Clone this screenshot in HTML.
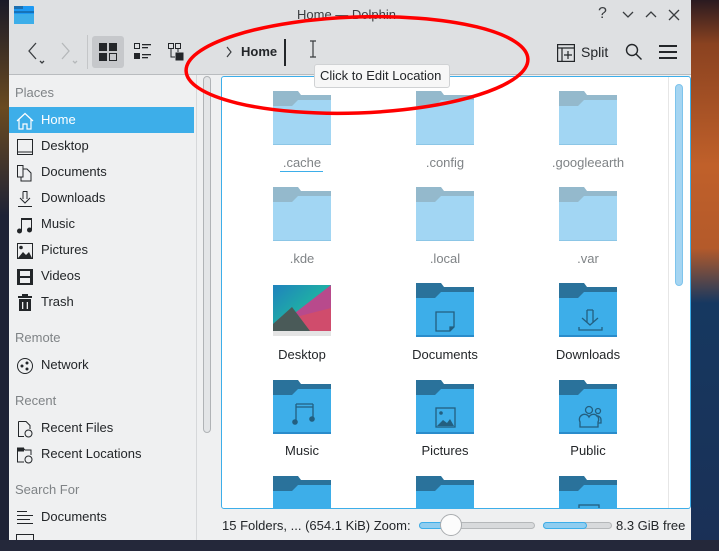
<!DOCTYPE html>
<html><head><meta charset="utf-8"><style>
*{margin:0;padding:0;box-sizing:border-box}
body{width:719px;height:551px;overflow:hidden;position:relative;font-family:"Liberation Sans","DejaVu Sans",sans-serif;background:#1b2236}
.a{position:absolute}
.t{font-size:13px;color:#232629;white-space:nowrap}
.sb .i{position:absolute;left:9px;width:185px;height:26px;font-size:13px;color:#232629;line-height:26px;padding-left:32px}
.sb .h{position:absolute;left:15px;font-size:13px;color:#7f8386}
.sb svg{position:absolute;left:7px;top:5px}
.lab{position:absolute;width:120px;text-align:center;font-size:13px;color:#232629}
.hid{color:#7f8386}
</style></head><body>
<div class="a" style="left:691px;top:0;width:28px;height:551px;background:linear-gradient(180deg,#2a1a20 0,#8a4220 8%,#c0602a 30%,#b45a2a 45%,#163860 55%,#1a3056 100%)"></div>
<div class="a" style="left:0;top:540px;width:719px;height:11px;background:#24283a"></div>
<div class="a" style="left:0;top:0;width:9px;height:540px;background:linear-gradient(180deg,#1a1a28,#6a4a20 20%,#1e2236 40%,#1e2236)"></div>
<div class="a" style="left:9px;top:0;width:682px;height:540px;background:#eff0f1"></div>
<div class="a" style="left:9px;top:0;width:682px;height:74px;background:#dee0e2"></div>
<div class="a" style="left:9px;top:74px;width:682px;height:1px;background:#b9bcbf"></div>
<svg class="a" style="left:14px;top:6px" width="20" height="18"><rect x="0" y="0" width="20" height="18" rx="1" fill="#1d99f3"/><rect x="0" y="0" width="9" height="3" fill="#1d6fb0"/><rect x="0" y="5" width="20" height="2" fill="#1673b8"/><rect x="0" y="8" width="20" height="10" fill="#3daee9"/></svg>
<div class="a t" style="left:297px;top:7px;color:#3a3d40">Home — Dolphin</div>
<div class="a t" style="left:598px;top:5px;font-size:16px;color:#3a3d40">?</div>
<svg class="a" style="left:622px;top:9px" width="60" height="12" fill="none" stroke="#3a3d40" stroke-width="1.3"><path d="M1 3 L6 8 L11 3"/><path d="M24 8 L29 3 L34 8"/><path d="M47 1 L57 11 M57 1 L47 11"/></svg>
<svg class="a" style="left:24px;top:40px" width="60" height="26" fill="none" stroke="#3a3d40" stroke-width="1.3"><path d="M12 3 L5 11 L12 19"/><path d="M16 21 l2 2 l2 -2" /><path d="M38 3 L45 11 L38 19" stroke="#b5b8ba"/><path d="M49 21 l2 2 l2 -2" stroke="#b5b8ba"/></svg>
<div class="a" style="left:87px;top:35px;width:1px;height:34px;background:#c4c6c8"></div>
<div class="a" style="left:92px;top:36px;width:32px;height:32px;background:#c6c8cb;border-radius:3px"></div>
<svg class="a" style="left:99px;top:43px" width="18" height="18"><rect x="0.5" y="0.5" width="7" height="7" fill="#232629" stroke="#232629"/><rect x="10.5" y="0.5" width="7" height="7" fill="#232629" stroke="#232629"/><rect x="0.5" y="10.5" width="7" height="7" fill="#232629" stroke="#232629"/><rect x="10.5" y="10.5" width="7" height="7" fill="none" stroke="#232629"/></svg>
<svg class="a" style="left:134px;top:43px" width="18" height="18" fill="#232629"><rect x="0.5" y="0.5" width="5" height="5" fill="none" stroke="#232629"/><rect x="8" y="1" width="9" height="1.3"/><rect x="8" y="4" width="6" height="1.3"/><rect x="0" y="10" width="6" height="6"/><rect x="8" y="11" width="9" height="1.3"/><rect x="8" y="14" width="6" height="1.3"/></svg>
<svg class="a" style="left:168px;top:43px" width="18" height="18" fill="none" stroke="#232629"><rect x="0.5" y="0.5" width="5" height="5"/><rect x="7.5" y="0.5" width="5" height="5"/><path d="M3 6 V14 H7 M10 6 V9"/><rect x="8" y="10" width="7" height="7" fill="#232629"/></svg>
<svg class="a" style="left:225px;top:46px" width="8" height="12" fill="none" stroke="#3a3d40" stroke-width="1.2"><path d="M2 1 L6 6 L2 11"/></svg>
<div class="a t" style="left:241px;top:44px;font-weight:bold;font-size:13px">Home</div>
<div class="a" style="left:284px;top:39px;width:2px;height:27px;background:#232629"></div>
<svg class="a" style="left:309px;top:40px" width="8" height="18" fill="none" stroke="#3a3d40" stroke-width="1.2"><path d="M1 1 H7 M4 1 V17 M1 17 H7"/></svg>
<svg class="a" style="left:557px;top:44px" width="18" height="18" fill="none" stroke="#232629" stroke-width="1.2"><rect x="0.6" y="0.6" width="16.8" height="16.8"/><path d="M0.6 4 H17.4 M5 4 V17.4 M11 7 V15 M7 11 H15"/></svg>
<div class="a t" style="left:581px;top:44px;font-size:14px">Split</div>
<svg class="a" style="left:625px;top:43px" width="18" height="18" fill="none" stroke="#232629" stroke-width="1.4"><circle cx="7" cy="7" r="5.5"/><path d="M11 11 L16.5 16.5"/></svg>
<svg class="a" style="left:659px;top:45px" width="18" height="14" fill="#232629"><rect y="0" width="18" height="2"/><rect y="6" width="18" height="2"/><rect y="12" width="18" height="2"/></svg>
<div class="sb">
<div class="h" style="top:85px">Places</div>
<div class="i" style="top:107px;background:#3daee9;color:#fff"><svg width="18" height="18" fill="none" stroke="#fff" stroke-width="1.2"><path d="M1 9 L9 1.5 L17 9 M3 7.5 V17 H7 V12 H11 V17 H15 V7.5"/></svg>Home</div>
<div class="i" style="top:133px"><svg width="18" height="18" fill="none" stroke="#232629"><rect x="1.5" y="1.5" width="15" height="15"/><path d="M1.5 14 H16.5"/></svg>Desktop</div>
<div class="i" style="top:159px"><svg width="18" height="18" fill="none" stroke="#232629"><path d="M1.5 1.5 H7 V13 H1.5 Z M7 5 H11 L15 9 V17 H5 V13"/></svg>Documents</div>
<div class="i" style="top:185px"><svg width="18" height="18" fill="none" stroke="#232629"><path d="M7 1.5 H11 V9 M7 1.5 V9 M4 8 L9 13 L14 8 M2 16.5 H16"/></svg>Downloads</div>
<div class="i" style="top:211px"><svg width="18" height="18" fill="#232629"><path d="M5 2 H16 V14 H15 V4 H6 V15 H5Z"/><circle cx="3.5" cy="15" r="2.5"/><circle cx="13.5" cy="14" r="2.5"/></svg>Music</div>
<div class="i" style="top:237px"><svg width="18" height="18"><rect x="1.5" y="1.5" width="15" height="15" fill="none" stroke="#232629"/><circle cx="5" cy="5.5" r="1.8" fill="#232629"/><path d="M2 16 L7 10 L10 13 L13 10 L16 16Z" fill="#232629"/></svg>Pictures</div>
<div class="i" style="top:263px"><svg width="18" height="18" fill="#232629"><rect x="1" y="1" width="16" height="16"/><rect x="4" y="3" width="10" height="5" fill="#eff0f1"/><rect x="4" y="10" width="10" height="5" fill="#eff0f1"/></svg>Videos</div>
<div class="i" style="top:289px"><svg width="18" height="18" fill="#232629"><rect x="2" y="2" width="14" height="2"/><rect x="6" y="0" width="6" height="2"/><rect x="3" y="5" width="12" height="12"/><rect x="6" y="8" width="1.3" height="7" fill="#eff0f1"/><rect x="10.7" y="8" width="1.3" height="7" fill="#eff0f1"/></svg>Trash</div>
<div class="h" style="top:330px">Remote</div>
<div class="i" style="top:352px"><svg width="18" height="18" fill="none" stroke="#232629"><circle cx="9" cy="9" r="7.5"/><circle cx="6" cy="9" r="1" fill="#232629"/><circle cx="11" cy="6" r="1" fill="#232629"/><circle cx="11" cy="12" r="1" fill="#232629"/></svg>Network</div>
<div class="h" style="top:393px">Recent</div>
<div class="i" style="top:415px"><svg width="18" height="18" fill="none" stroke="#232629"><path d="M2.5 1.5 H10 L14 5.5 V9 M2.5 1.5 V16.5 H8"/><circle cx="12.5" cy="13.5" r="3.5"/></svg>Recent Files</div>
<div class="i" style="top:441px"><svg width="18" height="18" fill="none" stroke="#232629"><path d="M1.5 2 H7 L9 4 H15 V9 M1.5 2 V16 H8" fill="none"/><rect x="1.5" y="2" width="6" height="3" fill="#232629"/><circle cx="12.5" cy="13.5" r="3.5"/></svg>Recent Locations</div>
<div class="h" style="top:482px">Search For</div>
<div class="i" style="top:504px"><svg width="18" height="18" fill="#232629"><rect x="1" y="2" width="10" height="1"/><rect x="1" y="6" width="16" height="1"/><rect x="1" y="10" width="13" height="1"/><rect x="1" y="14" width="16" height="1"/></svg>Documents</div>
<div class="a" style="left:16px;top:534px;width:18px;height:6px;border:1px solid #232629;border-bottom:none"></div>
</div>
<div class="a" style="left:196px;top:75px;width:1px;height:465px;background:#d6d8da"></div>
<div class="a" style="left:203px;top:76px;width:8px;height:357px;border:1px solid #b0b3b6;border-radius:4px;background:#e3e5e7"></div>
<div class="a" style="left:221px;top:76px;width:470px;height:433px;background:#fff;border:1px solid #3daee9;border-radius:3px;overflow:hidden">
<div class="a" style="left:446px;top:0;width:1px;height:433px;background:#e6e6e6"></div>
<div class="a" style="left:453px;top:7px;width:8px;height:202px;background:#a5d5f2;border:1px solid #7ec4ec;border-radius:4px"></div>
</div>
<svg width="0" height="0" style="position:absolute"><defs>
<g id="fh"><path d="M0 0 H25 L28 4 H58 V20 H0Z" fill="#94b9cc"/><path d="M0 15 H19 L25 9 H58 V54 H0Z" fill="#a2d6f3"/><rect y="53" width="58" height="1" fill="#8cc6e6"/></g>
<g id="fr"><path d="M0 0 H25 L28 4 H58 V20 H0Z" fill="#2a729b"/><path d="M0 15 H19 L25 9 H58 V54 H0Z" fill="#3daee9"/><rect y="52" width="58" height="2" fill="#2a8ccb"/></g>
</defs></svg>
<svg class="a" style="left:220px;top:76px" width="460" height="432">
<use href="#fh" x="53" y="15"/><use href="#fh" x="196" y="15"/><use href="#fh" x="339" y="15"/>
<use href="#fh" x="53" y="111"/><use href="#fh" x="196" y="111"/><use href="#fh" x="339" y="111"/>
<defs><linearGradient id="g1" x1="0" y1="0" x2="1" y2="1"><stop offset="0" stop-color="#1f82bd"/><stop offset="0.6" stop-color="#1fb8a0"/></linearGradient></defs>
<rect x="53" y="209" width="58" height="51" fill="url(#g1)"/>
<path d="M111 209 V260 H70 L71 240Z" fill="#b84a8c"/>
<path d="M111 232 V260 H85 L72 242Z" fill="#d04c6c"/>
<path d="M53 260 V248 L72 231 L90 255 L95 260Z" fill="#4a5a58"/>
<rect x="53" y="255" width="58" height="5" fill="#e4e4e4"/>
<use href="#fr" x="196" y="207"/><use href="#fr" x="339" y="207"/>
<use href="#fr" x="53" y="304"/><use href="#fr" x="196" y="304"/><use href="#fr" x="339" y="304"/>
<use href="#fr" x="53" y="400"/><use href="#fr" x="196" y="400"/><use href="#fr" x="339" y="400"/>
<g fill="none" stroke="#235f80" stroke-width="1.3">
<path d="M216 236 H234 V251 L230 255 H216Z"/><path d="M230 255 V251 H234" fill="#235f80"/>
<path d="M367 234 V246 M373 234 V246 M367 234 H373 M362 242 L370 249 L378 242 M359 251 V254 H382 V251"/>
<rect x="216" y="332" width="19" height="19"/>
<circle cx="369" cy="334" r="3.5"/><circle cx="378" cy="335" r="2.5"/><path d="M360 351 V346 A4.5 4.5 0 0 1 369 341 A4.5 4.5 0 0 1 378 346 V351 Z M376 340 A4 4 0 0 1 381 344 V347 H378"/>
<path d="M76 328 H93 M76 331 H93 M76 328 V345 M93 328 V342"/>
<path d="M226 437 L212 460"/>
<rect x="359" y="429" width="20" height="10"/>
</g>
<circle cx="75" cy="346" r="2.8" fill="#235f80"/><circle cx="92" cy="343" r="2.8" fill="#235f80"/>
<circle cx="221" cy="337" r="1.8" fill="#235f80"/><path d="M217 350 L223 344 L227 347 L230 343 L234 350Z" fill="#235f80"/>
</svg>
<div class="lab hid" style="left:242px;top:155px">.cache</div>
<div class="a" style="left:280px;top:171px;width:43px;height:1px;background:#3daee9"></div>
<div class="lab hid" style="left:385px;top:155px">.config</div>
<div class="lab hid" style="left:528px;top:155px">.googleearth</div>
<div class="lab hid" style="left:242px;top:251px">.kde</div>
<div class="lab hid" style="left:385px;top:251px">.local</div>
<div class="lab hid" style="left:528px;top:251px">.var</div>
<div class="lab" style="left:242px;top:347px">Desktop</div>
<div class="lab" style="left:385px;top:347px">Documents</div>
<div class="lab" style="left:528px;top:347px">Downloads</div>
<div class="lab" style="left:242px;top:443px">Music</div>
<div class="lab" style="left:385px;top:443px">Pictures</div>
<div class="lab" style="left:528px;top:443px">Public</div>
<div class="a" style="left:314px;top:64px;width:136px;height:24px;background:#f7f7f7;border:1px solid #d0d2d4;border-radius:3px;font-size:13px;color:#232629;line-height:22px;padding-left:5px;white-space:nowrap">Click to Edit Location</div>
<div class="a t" style="left:222px;top:518px">15 Folders, ... (654.1 KiB) Zoom:</div>
<div class="a" style="left:419px;top:522px;width:116px;height:7px;border:1px solid #b5b8ba;border-radius:4px;background:#d8dadc"></div>
<div class="a" style="left:419px;top:522px;width:34px;height:7px;border:1px solid #3daee9;border-radius:4px;background:#8fcdf0"></div>
<div class="a" style="left:440px;top:514px;width:22px;height:22px;border:1px solid #a9acaf;border-radius:50%;background:#fcfcfc"></div>
<div class="a" style="left:543px;top:522px;width:69px;height:7px;border:1px solid #b5b8ba;border-radius:4px;background:#d8dadc"></div>
<div class="a" style="left:543px;top:522px;width:44px;height:7px;border:1px solid #3daee9;border-radius:4px;background:#8fcdf0"></div>
<div class="a t" style="left:616px;top:518px">8.3 GiB free</div>
<svg class="a" style="left:0;top:0" width="719" height="551"><ellipse cx="357" cy="65" rx="171" ry="48" fill="none" stroke="#f00" stroke-width="3.5" transform="rotate(-2 357 65)"/></svg>
</body></html>
